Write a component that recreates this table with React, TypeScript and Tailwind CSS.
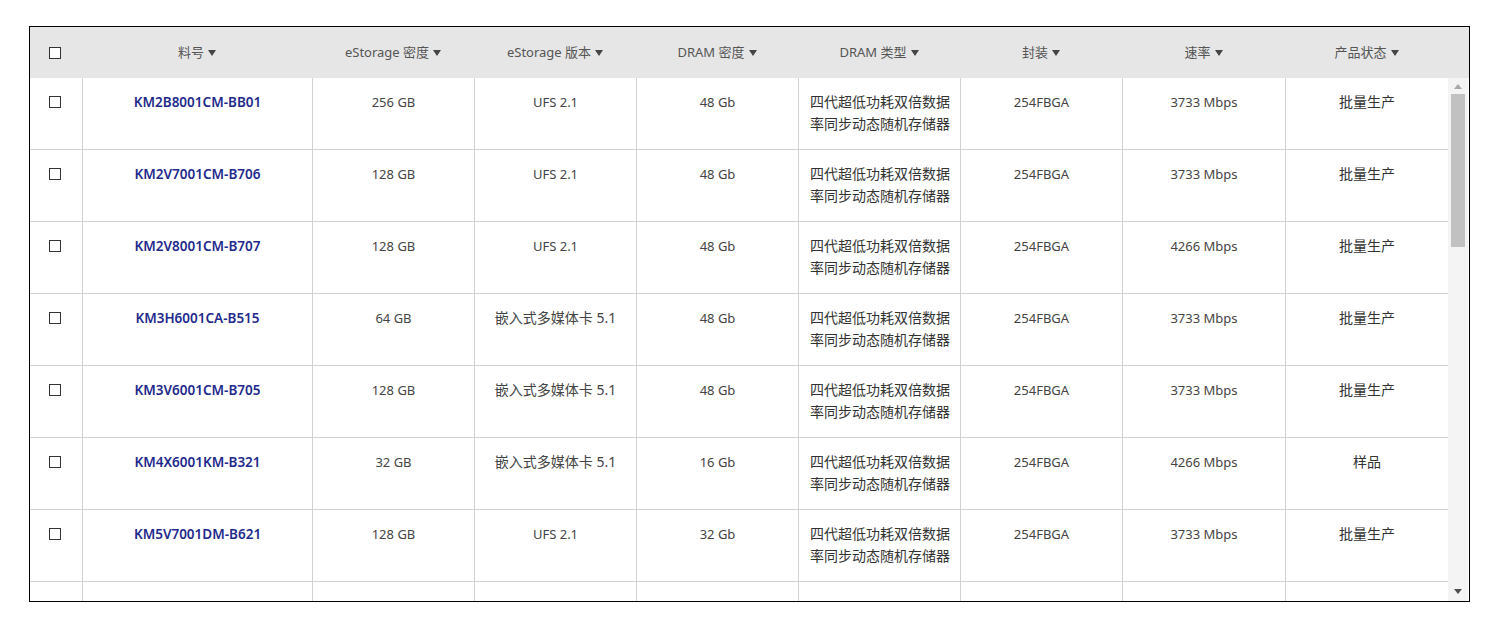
const columns = [
  { key: 'code', label: '料号', width: 'w-[230px]' },
  { key: 'eDensity', label: 'eStorage 密度', width: 'w-[162px]' },
  { key: 'eVersion', label: 'eStorage 版本', width: 'w-[162px]' },
  { key: 'dDensity', label: 'DRAM 密度', width: 'w-[162px]' },
  { key: 'dType', label: 'DRAM 类型', width: 'w-[162px]' },
  { key: 'pkg', label: '封装', width: 'w-[162px]' },
  { key: 'speed', label: '速率', width: 'w-[163px]' },
  { key: 'status', label: '产品状态', width: 'w-[163px]' },
];

interface Row {
  code: string;
  eDensity: string;
  eVersion: string;
  dDensity: string;
  speed: string;
  status: string;
}

const rows: Row[] = [
  { code: 'KM2B8001CM-BB01', eDensity: '256 GB', eVersion: 'UFS 2.1', dDensity: '48 Gb', speed: '3733 Mbps', status: '批量生产' },
  { code: 'KM2V7001CM-B706', eDensity: '128 GB', eVersion: 'UFS 2.1', dDensity: '48 Gb', speed: '3733 Mbps', status: '批量生产' },
  { code: 'KM2V8001CM-B707', eDensity: '128 GB', eVersion: 'UFS 2.1', dDensity: '48 Gb', speed: '4266 Mbps', status: '批量生产' },
  { code: 'KM3H6001CA-B515', eDensity: '64 GB', eVersion: '嵌入式多媒体卡 5.1', dDensity: '48 Gb', speed: '3733 Mbps', status: '批量生产' },
  { code: 'KM3V6001CM-B705', eDensity: '128 GB', eVersion: '嵌入式多媒体卡 5.1', dDensity: '48 Gb', speed: '3733 Mbps', status: '批量生产' },
  { code: 'KM4X6001KM-B321', eDensity: '32 GB', eVersion: '嵌入式多媒体卡 5.1', dDensity: '16 Gb', speed: '4266 Mbps', status: '样品' },
  { code: 'KM5V7001DM-B621', eDensity: '128 GB', eVersion: 'UFS 2.1', dDensity: '32 Gb', speed: '3733 Mbps', status: '批量生产' },
];

function Checkbox() {
  return <div className="w-[12px] h-[12px] border border-[#333] bg-white" />;
}

function SortArrow() {
  return (
    <svg width="8" height="6" viewBox="0 0 8 6" className="ml-[4px] inline-block">
      <path d="M0 0 L8 0 L4 6 Z" fill="#444" />
    </svg>
  );
}

function Cell({ width, children }: { width: string; children: React.ReactNode }) {
  return (
    <div className={`${width} shrink-0 border-l border-[#d2d2d2] pt-[13px] text-center`}>{children}</div>
  );
}

export default function App() {
  return (
    <div
      className="w-[1496px] h-[620px] bg-white pt-[26px] pl-[29px]"
      style={{ fontFamily: '"Noto Sans", "Noto Sans CJK SC", sans-serif' }}
    >
      <div className="w-[1441px] h-[576px] border border-black flex flex-col overflow-hidden">
        {/* Header */}
        <div className="h-[51px] bg-[#e6e6e6] flex items-center shrink-0 text-[13px] text-[#555]">
          <div className="w-[52px] shrink-0 flex pl-[19px]">
            <Checkbox />
          </div>
          {columns.map((c) => (
            <div key={c.key} className={`${c.width} shrink-0 flex items-center justify-center`}>
              <span>{c.label}</span>
              <SortArrow />
            </div>
          ))}
        </div>

        {/* Body */}
        <div className="flex flex-1 min-h-0">
          <div className="w-[1418px] shrink-0 overflow-hidden text-[13px] leading-[22px] text-[#444]">
            {rows.map((r) => (
              <div key={r.code} className="h-[72px] flex border-b border-[#d2d2d2]">
                <div className="w-[52px] shrink-0 flex pt-[18px] pl-[19px]">
                  <Checkbox />
                </div>
                <Cell width="w-[230px]">
                  <span className="font-semibold text-[13.5px] text-[#1e2a8c]">{r.code}</span>
                </Cell>
                <Cell width="w-[162px]">{r.eDensity}</Cell>
                <Cell width="w-[162px]">
                  <span className={r.eVersion.startsWith('嵌') ? 'text-[14px]' : 'text-[13px]'}>{r.eVersion}</span>
                </Cell>
                <Cell width="w-[162px]">{r.dDensity}</Cell>
                <div className="w-[162px] shrink-0 border-l border-[#d2d2d2] pt-[13px] pl-[11px] text-left text-[14px] text-[#333]">
                  <div>四代超低功耗双倍数据</div>
                  <div>率同步动态随机存储器</div>
                </div>
                <Cell width="w-[162px]">254FBGA</Cell>
                <Cell width="w-[163px]">{r.speed}</Cell>
                <Cell width="w-[163px]">
                  <span className="text-[14px] text-[#333]">{r.status}</span>
                </Cell>
              </div>
            ))}
            <div className="h-[72px] flex">
              <div className="w-[52px] shrink-0" />
              <div className="w-[230px] shrink-0 border-l border-[#d2d2d2]" />
              <div className="w-[162px] shrink-0 border-l border-[#d2d2d2]" />
              <div className="w-[162px] shrink-0 border-l border-[#d2d2d2]" />
              <div className="w-[162px] shrink-0 border-l border-[#d2d2d2]" />
              <div className="w-[162px] shrink-0 border-l border-[#d2d2d2]" />
              <div className="w-[162px] shrink-0 border-l border-[#d2d2d2]" />
              <div className="w-[163px] shrink-0 border-l border-[#d2d2d2]" />
              <div className="w-[163px] shrink-0 border-l border-[#d2d2d2]" />
            </div>
          </div>

          {/* Scrollbar */}
          <div className="w-[20px] shrink-0 bg-[#f4f4f4] flex flex-col items-center">
            <div className="h-[16px] w-full flex items-center justify-center">
              <svg width="8" height="5" viewBox="0 0 8 5">
                <path d="M0 5 L8 5 L4 0 Z" fill="#a8a8a8" />
              </svg>
            </div>
            <div className="w-[14px] h-[153px] bg-[#c1c1c1]" />
            <div className="flex-1" />
            <div className="h-[16px] w-full flex items-center justify-center mb-[2px]">
              <svg width="8" height="5" viewBox="0 0 8 5">
                <path d="M0 0 L8 0 L4 5 Z" fill="#505050" />
              </svg>
            </div>
          </div>
        </div>
      </div>
    </div>
  );
}
